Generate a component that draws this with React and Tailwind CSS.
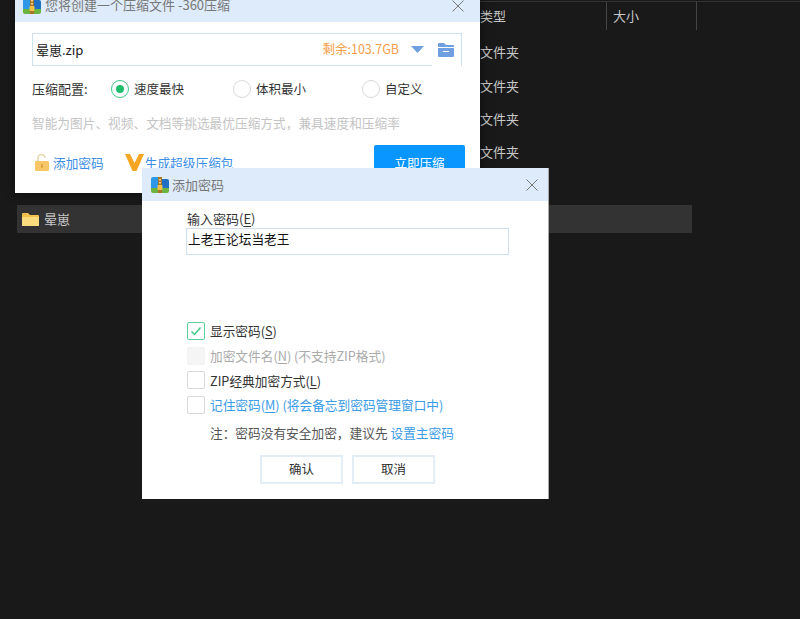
const font = { fontFamily: '"Noto Sans CJK SC", "Liberation Sans", sans-serif' };

const ZipIcon = ({ className }) => (
  <svg className={className} viewBox="0 0 18 16">
    <path d="M0 2a2 2 0 0 1 2-2h6l2 2v10H0z" fill="#2f97e8" />
    <path d="M10 2h6a2 2 0 0 1 2 2v8h-8z" fill="#1f6fc4" />
    <path d="M0 11h18v3a2 2 0 0 1-2 2H2a2 2 0 0 1-2-2z" fill="#6cb33f" />
    <rect x="7" y="0" width="4" height="16" fill="#a9762c" />
    <rect x="6.5" y="8" width="5" height="5" rx="1" fill="#f0c24b" />
    <rect x="8" y="2" width="2" height="1.5" fill="#f0d48a" />
    <rect x="8" y="5" width="2" height="1.5" fill="#f0d48a" />
  </svg>
);

const CloseIcon = ({ className }) => (
  <svg className={className} viewBox="0 0 12 12" fill="none" stroke="currentColor" strokeWidth="1">
    <path d="M0.5 0.5 11.5 11.5M11.5 0.5 0.5 11.5" />
  </svg>
);

const Radio = ({ checked, label, className }) => (
  <div className={`flex items-center gap-[5px] ${className}`}>
    <span className={`flex h-[18px] w-[18px] items-center justify-center rounded-full border ${checked ? 'border-[1.5px] border-[#3ec984]' : 'border-[#d9d9d9]'}`}>
      {checked && <span className="h-2 w-2 rounded-full bg-[#1fbf6c]" />}
    </span>
    <span className="text-[12.5px] text-[#333]">{label}</span>
  </div>
);

const Check = ({ checked, disabled, children }) => (
  <div className="flex h-[18px] items-center gap-[5px]">
    <span className={`flex h-[18px] w-[18px] shrink-0 items-center justify-center rounded-[2px] border ${checked ? 'border-[#5fcf9a]' : disabled ? 'border-[#f2f2f2] bg-[#f5f5f5]' : 'border-[#d9d9d9]'}`}>
      {checked && (
        <svg className="h-3 w-3" viewBox="0 0 12 12" fill="none" stroke="#3ec984" strokeWidth="1.5">
          <path d="M1.5 6.5 4.5 9.5 10.5 2.5" />
        </svg>
      )}
    </span>
    {children}
  </div>
);

const Key = ({ children }) => <span className="underline underline-offset-2">{children}</span>;

export default function App() {
  return (
    <div className="relative h-[619px] w-[800px] overflow-hidden bg-[#191919]" style={font}>
      {/* file list behind the dialogs */}
      <div className="pl-[17px] pt-px text-[13px] text-[#c8c8c8]">
        <div className="flex h-[29px] border-t border-[#333] pl-[463px]">
          <div className="flex w-[127px] items-center border-r border-[#444]">类型</div>
          <div className="flex w-[90px] items-center border-r border-[#444] pl-[6px]">大小</div>
        </div>
        <div className="pl-[463px] pt-[5.5px]">
          <div className="flex h-[33.3px] items-center">文件夹</div>
          <div className="flex h-[33.3px] items-center">文件夹</div>
          <div className="flex h-[33.3px] items-center">文件夹</div>
          <div className="flex h-[33.3px] items-center">文件夹</div>
        </div>
        <div className="mt-[36.5px] flex h-[28px] w-[675px] items-center gap-[5px] bg-[#333] pl-[5px]">
          <svg className="h-[14px] w-[17px]" viewBox="0 0 17 14">
            <path d="M0 2a1 1 0 0 1 1-1h5l2 2h8a1 1 0 0 1 1 1v9a1 1 0 0 1-1 1H1a1 1 0 0 1-1-1z" fill="#f2c14e" />
            <path d="M0 5h17v8a1 1 0 0 1-1 1H1a1 1 0 0 1-1-1z" fill="#fbdc7e" />
          </svg>
          <span>晕崽</span>
        </div>
      </div>

      {/* compress window */}
      <div className="absolute left-[15px] top-[-11px] h-[204px] w-[465px] bg-white shadow-[0_0_10px_rgba(0,0,0,0.5)]">
        <div className="flex h-[33px] items-center bg-[#deebfa] pl-[8px] pr-[16px]">
          <ZipIcon className="h-[16px] w-[18px]" />
          <span className="ml-[4px] -translate-y-px text-[13px] text-[#777]">您将创建一个压缩文件 -360压缩</span>
          <CloseIcon className="ml-auto h-3 w-3 text-[#777]" />
        </div>
        <div className="px-[17px] pt-[11px]">
          <div className="relative flex h-[33px] w-[430px] items-center border border-[#cfe0ee] pl-[3px] pr-[7px]">
            <span className="text-[13px] text-[#222]">晕崽.zip</span>
            <span className="ml-auto text-[12.5px] text-[#f5a04a]">剩余:103.7GB</span>
            <svg className="ml-[12px] h-[7px] w-[13px]" viewBox="0 0 13 7">
              <path d="M0 0h13L6.5 7z" fill="#6f9fe0" />
            </svg>
            <svg className="ml-[14px] h-[14px] w-[16px]" viewBox="0 0 16 14">
              <path d="M0 1a1 1 0 0 1 1-1h5l2 2h7a1 1 0 0 1 1 1v1H0z" fill="#6f9fe0" />
              <path d="M0 5h16v8a1 1 0 0 1-1 1H1a1 1 0 0 1-1-1zM5 8v1h6V8z" fill="#6f9fe0" fillRule="evenodd" />
            </svg>
            <span className="absolute -bottom-px right-0 h-px w-[29px] bg-white" />
          </div>
          <div className="mt-[14px] flex h-[18px] items-center">
            <span className="w-[79px] text-[13px] text-[#333]">压缩配置:</span>
            <Radio checked label="速度最快" className="w-[122px]" />
            <Radio label="体积最小" className="w-[129px]" />
            <Radio label="自定义" />
          </div>
          <div className="mt-[15px] h-[20px] text-[12.7px] leading-[20px] text-[#c4c4c4]">智能为图片、视频、文档等挑选最优压缩方式，兼具速度和压缩率</div>
          <div className="mt-[12px] flex h-[38px] items-start">
            <div className="flex items-center pt-[8px]">
              <svg className="ml-[3px] h-[17px] w-[14px]" viewBox="0 0 14 17">
                <path d="M3 7V4a3.500 3.500 0 0 1 7 0" fill="none" stroke="#e8d5a8" strokeWidth="1.500" />
                <rect y="7" width="14" height="10" rx="1" fill="#f6c667" />
                <rect x="6" y="10" width="2" height="4" fill="#e3a63e" />
              </svg>
              <span className="ml-[4px] text-[12.7px] text-[#3a8ee6]">添加密码</span>
              <svg className="ml-[21px] h-[17px] w-[19px]" viewBox="0 0 19 17">
                <path d="M0 0h5l4.500 9L14 0h5l-7.500 17h-4z" fill="#f6a623" />
              </svg>
              <span className="ml-px text-[12.7px] text-[#3a8ee6]">生成超级压缩包</span>
            </div>
            <button className="-mr-[2px] ml-auto h-[38px] w-[91px] rounded-[2px] bg-[#0a96ff] pb-[2px] text-[12.5px] text-white">立即压缩</button>
          </div>
        </div>
      </div>

      {/* password dialog */}
      <div className="absolute left-[142px] top-[168px] h-[331px] w-[407px] border-r border-[#aaa] bg-white">
        <div className="flex h-[33px] items-center bg-[#deebfa] pl-[9px] pr-[10px]">
          <ZipIcon className="h-[16px] w-[18px]" />
          <span className="ml-[3px] text-[13px] text-[#777]">添加密码</span>
          <CloseIcon className="ml-auto h-3 w-3 text-[#777]" />
        </div>
        <div className="pl-[45px] pt-[8px]">
          <div className="h-[19px] text-[13px] leading-[19px] text-[#333]">输入密码(<Key>E</Key>)</div>
          <div className="-ml-px flex h-[27px] w-[323px] items-start border border-[#cfdff0] pl-px text-[12.7px] leading-[20px] text-[#111]">上老王论坛当老王</div>
          <div className="mt-[67px] flex flex-col gap-[6.6px] text-[12.7px] text-[#333]">
            <Check checked><span>显示密码(<Key>S</Key>)</span></Check>
            <Check disabled><span className="text-[#aaa]">加密文件名(<Key>N</Key>) (不支持ZIP格式)</span></Check>
            <Check><span>ZIP经典加密方式(<Key>L</Key>)</span></Check>
            <Check><span className="text-[#3a9be6]">记住密码(<Key>M</Key>) (将会备忘到密码管理窗口中)</span></Check>
          </div>
          <div className="mt-[10px] pl-[23px] text-[12.7px] leading-[18px] text-[#555]">
            注：密码没有安全加密，建议先 <span className="text-[#3a9be6]">设置主密码</span>
          </div>
          <div className="ml-[73px] mt-[13px] flex gap-[9px] text-[12.5px] text-[#333]">
            <button className="h-[29px] w-[83px] border-2 border-[#e3edf7] bg-white">确认</button>
            <button className="h-[29px] w-[83px] border-2 border-[#e3edf7] bg-white">取消</button>
          </div>
        </div>
      </div>
    </div>
  );
}
